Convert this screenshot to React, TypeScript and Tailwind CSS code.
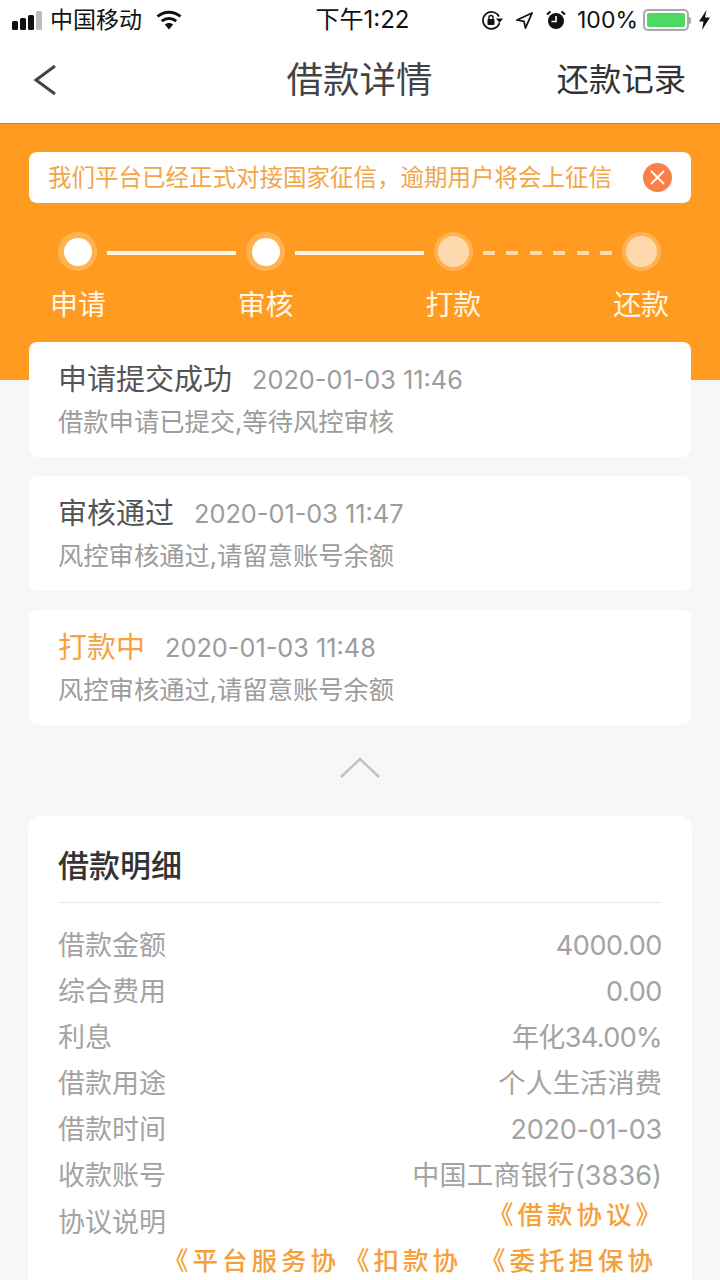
const font = "font-['Inter','Noto_Sans_CJK_SC',sans-serif]";

const steps = [
  { label: '申请', done: true },
  { label: '审核', done: true },
  { label: '打款', done: false },
  { label: '还款', done: false },
];

const records = [
  { title: '申请提交成功', time: '2020-01-03 11:46', desc: '借款申请已提交,等待风控审核', active: false },
  { title: '审核通过', time: '2020-01-03 11:47', desc: '风控审核通过,请留意账号余额', active: false },
  { title: '打款中', time: '2020-01-03 11:48', desc: '风控审核通过,请留意账号余额', active: true },
];

const details = [
  { k: '借款金额', v: '4000.00', cls: 'tracking-[-0.4px]' },
  { k: '综合费用', v: '0.00', cls: 'tracking-[-0.4px]' },
  { k: '利息', v: '年化34.00%', cls: 'tracking-[-0.6px]' },
  { k: '借款用途', v: '个人生活消费', cls: 'text-[27.3px]' },
  { k: '借款时间', v: '2020-01-03', cls: 'tracking-[-0.2px]' },
  { k: '收款账号', v: '中国工商银行(3836)', cls: 'tracking-[0.1px]' },
];

function StatusBar() {
  return (
    <div className="flex h-10 items-center justify-between pl-3 pr-[10px] text-[24px] text-[#111]">
      <div className="flex w-[240px] items-center">
        <div className="flex items-end gap-[2px]">
          <div className="h-[9px] w-[6px] rounded-[1.5px] bg-[#111]" />
          <div className="h-[12px] w-[6px] rounded-[1.5px] bg-[#111]" />
          <div className="h-[15px] w-[6px] rounded-[1.5px] bg-[#111]" />
          <div className="h-[19px] w-[6px] rounded-[1.5px] bg-[#bbb]" />
        </div>
        <span className="ml-[8px] text-[23px] leading-none">中国移动</span>
        <svg className="ml-[13px]" width="28" height="20" viewBox="0 0 28 20">
          <path d="M14 19.500 9.800 14.600c2.400-2 6-2 8.400 0Z" fill="#111" />
          <path d="M6.800 11.200c4-3.500 10.400-3.500 14.400 0" fill="none" stroke="#111" strokeWidth="3" />
          <path d="M2.500 6.500c6.500-5.800 16.500-5.800 23 0" fill="none" stroke="#111" strokeWidth="3" />
        </svg>
      </div>
      <span className="ml-[3px] leading-none">下午1:22</span>
      <div className="flex w-[240px] items-center justify-end">
        <svg width="24" height="23" viewBox="0 0 24 22">
          <path d="M19.500 13.500A8.500 8.500 0 1 1 19 7" fill="none" stroke="#111" strokeWidth="1.700" />
          <path d="M23 9h-7l3.500 4.500Z" fill="#111" />
          <rect x="7.500" y="9.500" width="7" height="6" rx="1" fill="#111" />
          <path d="M9 10V8a2 2 0 0 1 4 0v2" fill="none" stroke="#111" strokeWidth="1.400" />
        </svg>
        <svg className="ml-[11px]" width="19" height="19" viewBox="0 0 20 20">
          <path d="M18 2 2 9.500l7.500 1.500L11 18Z" fill="none" stroke="#111" strokeWidth="1.800" strokeLinejoin="round" />
        </svg>
        <svg className="ml-[12px]" width="20" height="20" viewBox="0 0 20 20">
          <circle cx="10" cy="11" r="8" fill="#111" />
          <path d="M10 6v5.500H5.500" fill="none" stroke="#fff" strokeWidth="1.600" />
          <path d="M1 4.500 4.500 1.500M19 4.500l-3.500-3" stroke="#111" strokeWidth="2.200" />
        </svg>
        <span className="ml-[11px] text-[23px] leading-none">100%</span>
        <div className="ml-[5px] flex h-[22px] w-[46px] items-center rounded-[5px] border-2 border-[#a9a9a9] p-[2px]">
          <div className="h-full w-full rounded-[2px] bg-[#4cd964]" />
        </div>
        <div className="h-[7px] w-[2px] rounded-r-full bg-[#a9a9a9]" />
        <svg className="ml-[8px]" width="11" height="20" viewBox="0 0 11 20">
          <path d="M7.500 0 0 11.500h4.500L3 20l8-12.500H6Z" fill="#111" />
        </svg>
      </div>
    </div>
  );
}

function Stepper() {
  return (
    <div className="mt-[29px] pl-[58px] pr-[59px]">
      <div className="flex items-center">
        {steps.map((s, i) => (
          <div key={s.label} className={i < 3 ? 'flex flex-1 items-center' : 'flex items-center'}>
            <div className="flex h-[39px] w-[39px] shrink-0 items-center justify-center rounded-full bg-[#ffb24f]">
              <div className={s.done
                ? 'h-[28px] w-[28px] rounded-full bg-white'
                : 'h-[31px] w-[31px] rounded-full bg-[#ffd9ae]'} />
            </div>
            {i < 2 && <div className="mx-[10px] mt-[2px] h-[4px] flex-1 bg-[#fff6e6]" />}
            {i === 2 && (
              <div className="mx-[10px] mt-[2px] flex flex-1 justify-between">
                {[0, 1, 2, 3, 4, 5].map((d) => (
                  <div key={d} className="h-[4px] w-[12px] bg-[#ffd9ae]" />
                ))}
              </div>
            )}
          </div>
        ))}
      </div>
      <div className="-mx-[8px] mt-[15px] flex justify-between text-[28px] leading-[38px] tracking-[-0.100px] text-[#fff6e6]">
        {steps.map((s) => (
          <span key={s.label}>{s.label}</span>
        ))}
      </div>
    </div>
  );
}

export default function App() {
  return (
    <div className={`${font} h-[1280px] w-[720px] overflow-hidden bg-[#f7f7f7]`}>
      <div className="bg-white">
        <StatusBar />
        <div className="grid h-[84px] grid-cols-3 items-center border-b border-[#c9801f] pb-[3px] pl-[33px] pr-[34px]">
          <svg width="24" height="32" viewBox="0 0 24 32">
            <path d="M22 2 3 16l19 14" fill="none" stroke="#444" strokeWidth="3" />
          </svg>
          <h1 className="whitespace-nowrap text-center text-[36.500px] font-normal leading-none text-[#444]">借款详情</h1>
          <span className="text-right text-[32.300px] leading-none text-[#333]">还款记录</span>
        </div>
      </div>

      <div className="h-[256px] bg-[#ff9b20] pt-[28px]">
        <div className="mx-[29px] flex h-[51px] items-center justify-between rounded-[8px] bg-white px-[19px]">
          <span className="text-[23.500px] leading-none text-[#f3a648]">我们平台已经正式对接国家征信，逾期用户将会上征信</span>
          <div className="flex h-[29px] w-[29px] items-center justify-center rounded-full bg-[#f9804a]">
            <svg width="17" height="17" viewBox="0 0 17 17">
              <path d="M2 2l13 13M15 2 2 15" stroke="#fff" strokeWidth="1.900" />
            </svg>
          </div>
        </div>
        <Stepper />
      </div>

      <div className="-mt-[38px] flex flex-col gap-[19px] px-[29px]">
        {records.map((r) => (
          <div key={r.time} className="h-[115px] rounded-[8px] bg-white pl-[29px] pt-[19px]">
            <div className="flex items-center">
              <span className={r.active ? 'text-[29px] leading-[38px] text-[#f5a341]' : 'text-[29px] leading-[38px] text-[#555]'}>{r.title}</span>
              <span className="ml-[20px] text-[25.300px] leading-[38px] text-[#9c9c9c]">{r.time}</span>
            </div>
            <p className="mt-[6px] text-[25.300px] leading-[34px] text-[#9c9c9c]">{r.desc}</p>
          </div>
        ))}
      </div>

      <div className="flex h-[91px] items-center justify-center pb-[6px]">
        <svg width="40" height="24" viewBox="0 0 40 24">
          <path d="M1 21 20 3l19 18" fill="none" stroke="#c4c4c4" strokeWidth="2.500" />
        </svg>
      </div>

      <div className="mx-[28px] h-[600px] rounded-[12px] bg-white px-[30px]">
        <h2 className="flex h-[87px] items-center border-b border-[#e8e8e8] pt-[14px] text-[31px] font-medium text-[#333]">借款明细</h2>
        <div className="mt-[20px] flex flex-col text-[27px] leading-[46px] text-[#a3a3a3]">
          {details.map((d) => (
            <div key={d.k} className="flex justify-between">
              <span>{d.k}</span>
              <span className={d.cls}>{d.v}</span>
            </div>
          ))}
          <div className="flex justify-between">
            <span className="mt-[1px]">协议说明</span>
          </div>
        </div>
        <div className="-mt-[54px] flex flex-col text-[25.500px] font-medium leading-[46px] tracking-[4px] text-[#f5a03a]">
          <div className="-mr-[3px] flex justify-end">《借款协议》</div>
          <div className="-ml-[20px] flex justify-end gap-[4px] pr-[5px]">
            <span>《平台服务协</span>
            <span>《扣款协</span>
            <span className="ml-[14px]">《委托担保协</span>
          </div>
        </div>
      </div>
    </div>
  );
}
